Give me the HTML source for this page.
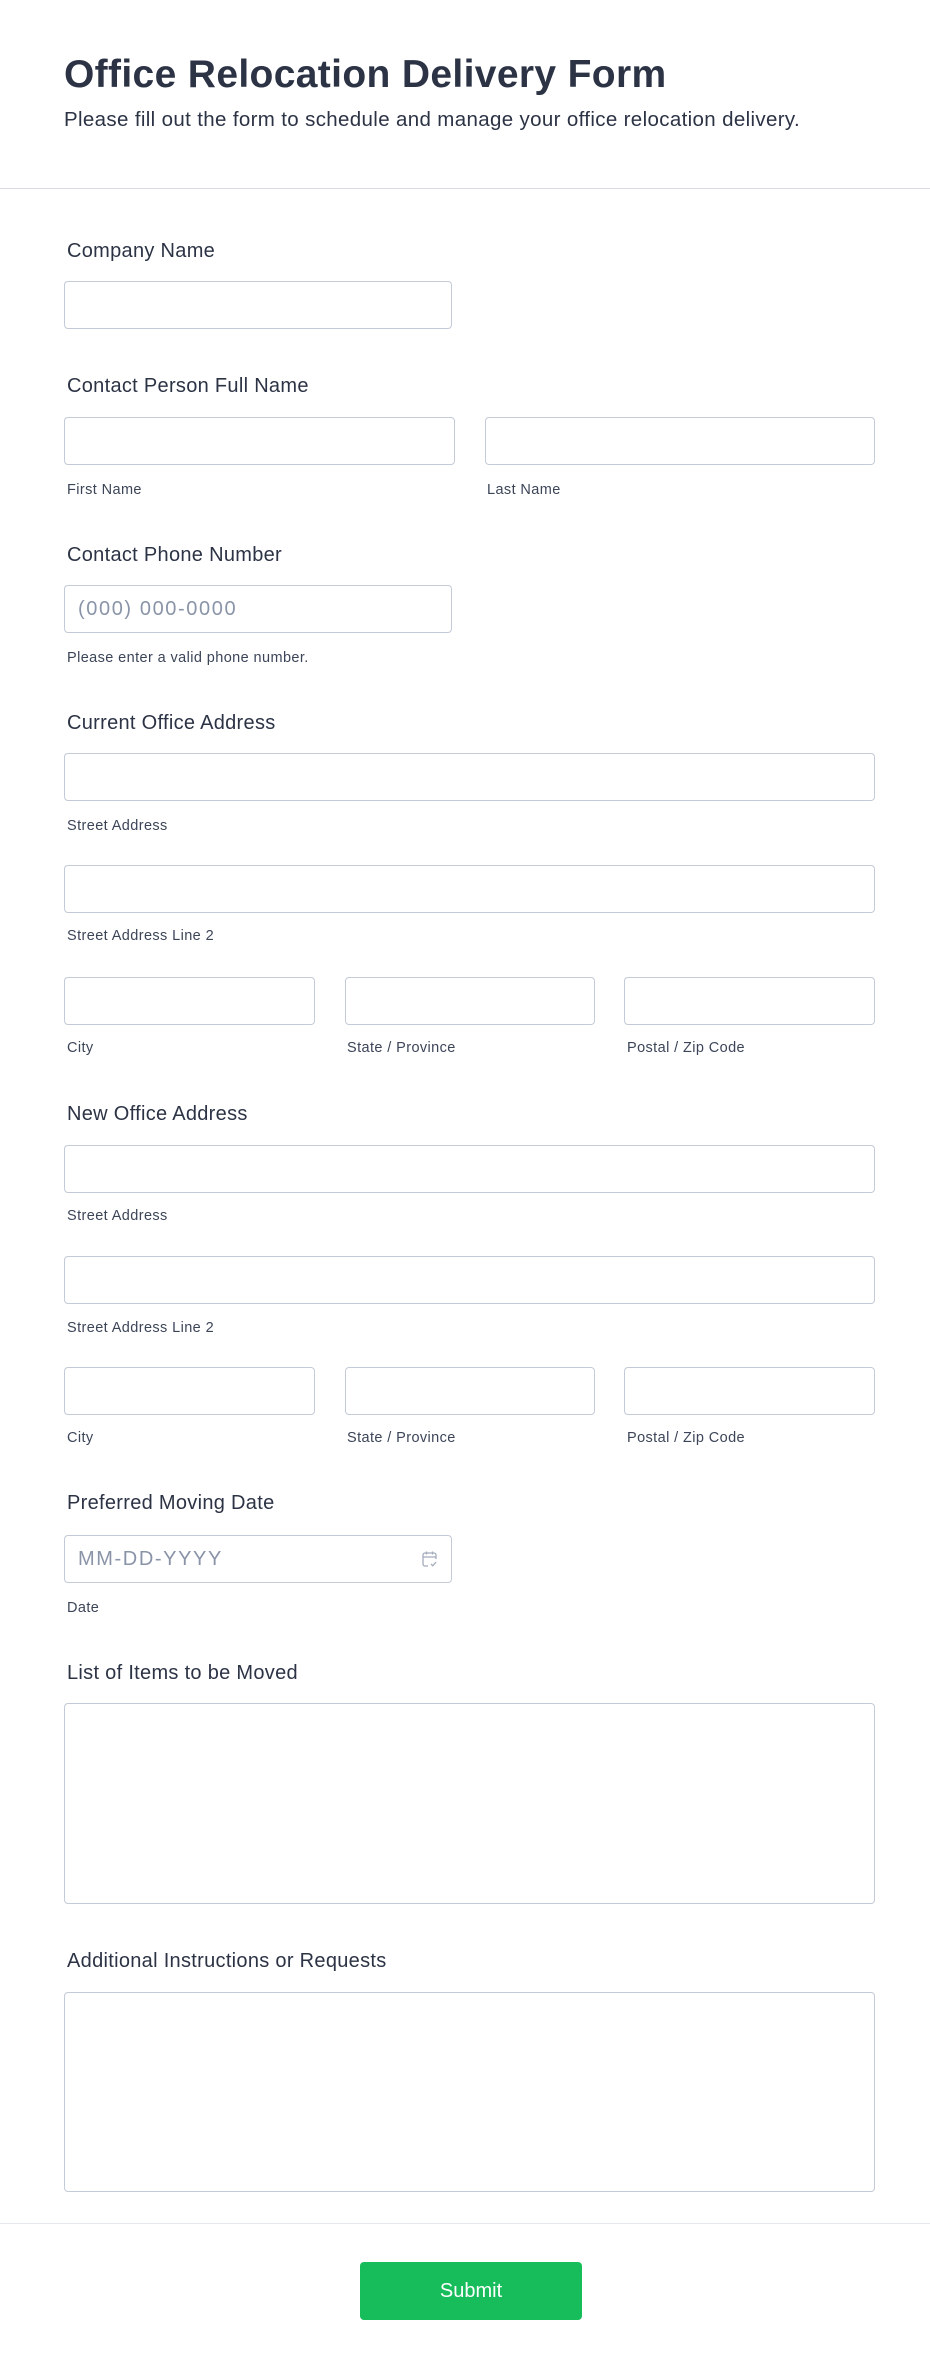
<!DOCTYPE html>
<html><head><meta charset="utf-8"><style>
*{box-sizing:border-box;margin:0;padding:0}
body{width:930px;height:2370px;background:#fff;font-family:"Liberation Sans",Arial,sans-serif;color:#2c3345;position:relative;overflow:hidden}
.a{position:absolute}
.t{font-size:39px;font-weight:bold;left:64px;top:53px;letter-spacing:0.35px}
.s{font-size:20.5px;left:64px;top:108px;letter-spacing:0.35px}
.hr{left:0;width:930px;height:1px;background:#d8dae6}
.l{font-size:20px;left:67px;letter-spacing:0.3px}
.sl{font-size:14.5px;color:#3c4558;letter-spacing:0.4px}
.i{border:1px solid #c3cad8;border-radius:4px;background:#fff;height:48px}
.ph{font-size:20px;color:#8a94a8;letter-spacing:1.6px}
</style></head><body>
<div class="a t">Office Relocation Delivery Form</div>
<div class="a s">Please fill out the form to schedule and manage your office relocation delivery.</div>
<div class="a hr" style="top:188px"></div>

<div class="a l" style="top:240px">Company Name</div>
<div class="a i" style="left:64px;top:281px;width:388px"></div>

<div class="a l" style="top:375px">Contact Person Full Name</div>
<div class="a i" style="left:64px;top:417px;width:391px"></div>
<div class="a i" style="left:485px;top:417px;width:390px"></div>
<div class="a sl" style="left:67px;top:482px">First Name</div>
<div class="a sl" style="left:487px;top:482px">Last Name</div>

<div class="a l" style="top:544px">Contact Phone Number</div>
<div class="a i" style="left:64px;top:585px;width:388px"><span class="a ph" style="left:13px;top:12px">(000) 000-0000</span></div>
<div class="a sl" style="left:67px;top:650px">Please enter a valid phone number.</div>

<div class="a l" style="top:712px">Current Office Address</div>
<div class="a i" style="left:64px;top:753px;width:811px"></div>
<div class="a sl" style="left:67px;top:818px">Street Address</div>
<div class="a i" style="left:64px;top:865px;width:811px"></div>
<div class="a sl" style="left:67px;top:928px">Street Address Line 2</div>
<div class="a i" style="left:64px;top:977px;width:251px"></div>
<div class="a i" style="left:345px;top:977px;width:250px"></div>
<div class="a i" style="left:624px;top:977px;width:251px"></div>
<div class="a sl" style="left:67px;top:1040px">City</div>
<div class="a sl" style="left:347px;top:1040px">State / Province</div>
<div class="a sl" style="left:627px;top:1040px">Postal / Zip Code</div>

<div class="a l" style="top:1103px">New Office Address</div>
<div class="a i" style="left:64px;top:1145px;width:811px"></div>
<div class="a sl" style="left:67px;top:1208px">Street Address</div>
<div class="a i" style="left:64px;top:1256px;width:811px"></div>
<div class="a sl" style="left:67px;top:1320px">Street Address Line 2</div>
<div class="a i" style="left:64px;top:1367px;width:251px"></div>
<div class="a i" style="left:345px;top:1367px;width:250px"></div>
<div class="a i" style="left:624px;top:1367px;width:251px"></div>
<div class="a sl" style="left:67px;top:1430px">City</div>
<div class="a sl" style="left:347px;top:1430px">State / Province</div>
<div class="a sl" style="left:627px;top:1430px">Postal / Zip Code</div>

<div class="a l" style="top:1492px">Preferred Moving Date</div>
<div class="a i" style="left:64px;top:1535px;width:388px"><span class="a ph" style="left:13px;top:12px">MM-DD-YYYY</span>
<svg class="a" style="left:355px;top:13px" width="20" height="20" viewBox="0 0 20 20" fill="none" stroke="#a4abbb" stroke-width="1.3"><path d="M8 17H5a2 2 0 0 1-2-2V6a2 2 0 0 1 2-2h9a2 2 0 0 1 2 2v4M3 8h13M6.5 2.5v3M12.5 2.5v3M11 15l1.8 1.8L16 13"/></svg></div>
<div class="a sl" style="left:67px;top:1600px">Date</div>

<div class="a l" style="top:1662px">List of Items to be Moved</div>
<div class="a i" style="left:64px;top:1703px;width:811px;height:201px"></div>

<div class="a l" style="top:1950px">Additional Instructions or Requests</div>
<div class="a i" style="left:64px;top:1992px;width:811px;height:200px"></div>

<div class="a hr" style="top:2223px;background:#e6e8ef"></div>
<div class="a" style="left:360px;top:2262px;width:222px;height:58px;background:#18bd5b;border-radius:4px;color:#fff;font-size:20px;text-align:center;line-height:58px">Submit</div>
</body></html>
